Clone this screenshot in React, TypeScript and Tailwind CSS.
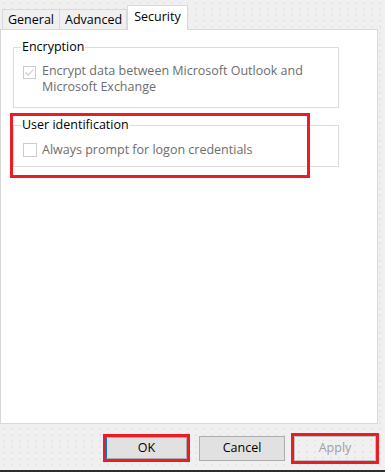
import React from "react";

const dots =
  "bg-[#f0f0f0] bg-[radial-gradient(circle,#dadada_0.6px,transparent_0.8px)] bg-[length:8px_6px]";

export default function App() {
  return (
    <div
      className={`relative flex h-[472px] w-[385px] flex-col overflow-hidden ${dots} text-[12.5px] leading-[16px] text-black`}
      style={{ fontFamily: '"Open Sans", "Noto Sans", Arial, sans-serif' }}
    >
      {/* tabs */}
      <div className="flex h-[29px] items-end pl-[2px]">
        <div className="flex h-[20px] w-[57px] items-center border border-b-0 border-r-0 border-[#d9d9d9] bg-[#f0f0f0] pl-[5px]">
          General
        </div>
        <div className="flex h-[20px] w-[68px] items-center border border-b-0 border-[#d9d9d9] bg-[#f0f0f0] pl-[5px]">
          Advanced
        </div>
        <div className="relative z-10 -mb-px flex h-[25px] w-[61px] items-start justify-center border border-b-0 border-[#d9d9d9] bg-white pt-[3px] text-black">
          Security
        </div>
      </div>

      {/* panel */}
      <div className="h-[395px] w-[378px] border border-[#d9d9d9] bg-white pt-[9px] pl-[12px]">
        <fieldset className="h-[69px] w-[326px] border border-[#dcdcdc] px-0">
          <legend className="ml-[7px] px-[1px] text-black">Encryption</legend>
          <div className="mt-[8px] flex items-start pl-[9px]">
            <div className="mt-[3px] flex h-[13px] w-[13px] shrink-0 items-center justify-center border border-[#cccccc] bg-white">
              <svg width="11" height="11" viewBox="0 0 11 11">
                <path
                  d="M1.5 5.5 L4.2 8.2 L9.5 2.5"
                  fill="none"
                  stroke="#c8c8c8"
                  strokeWidth="1.1"
                />
              </svg>
            </div>
            <div className="ml-[6px] text-[#6d6d6d]">
              Encrypt data between Microsoft Outlook and
              <br />
              Microsoft Exchange
            </div>
          </div>
        </fieldset>

        <fieldset className="mt-[9px] h-[50px] w-[326px] border border-[#dcdcdc] px-0">
          <legend className="ml-[7px] px-[1px] text-black">User identification</legend>
          <div className="mt-[9px] flex items-start pl-[9px]">
            <div className="mt-[1px] h-[14px] w-[14px] shrink-0 border border-[#cccccc] bg-white" />
            <div className="ml-[5px] text-[#6d6d6d]">Always prompt for logon credentials</div>
          </div>
        </fieldset>
      </div>

      {/* buttons */}
      <div className="flex h-[46px] items-center justify-end pr-[6px] pt-[2px]">
        <div className="flex h-[28px] w-[87px] items-center justify-center border-[3px] border-[#ec1c24]">
          <button className="h-full w-full border border-[#adadad] border-l-[#0078d7] bg-[#e1e1e1] text-black">
            OK
          </button>
        </div>
        <button className="ml-[9px] h-[25px] w-[86px] border border-[#adadad] bg-[#e1e1e1] text-black">
          Cancel
        </button>
        <div className="ml-[6px] flex h-[31px] w-[88px] items-center justify-center border-[3px] border-[#ec1c24]">
          <button className={`h-full w-full border border-[#bfbfbf] ${dots} text-[#a0a0a0]`}>
            Apply
          </button>
        </div>
      </div>
      <div className="h-[2px] w-full bg-[#2e2e2e]" />

      {/* red annotation */}
      <div className="pointer-events-none absolute left-[10px] top-[113px] h-[65px] w-[300px] border-[3px] border-[#ec1c24]" />
    </div>
  );
}
